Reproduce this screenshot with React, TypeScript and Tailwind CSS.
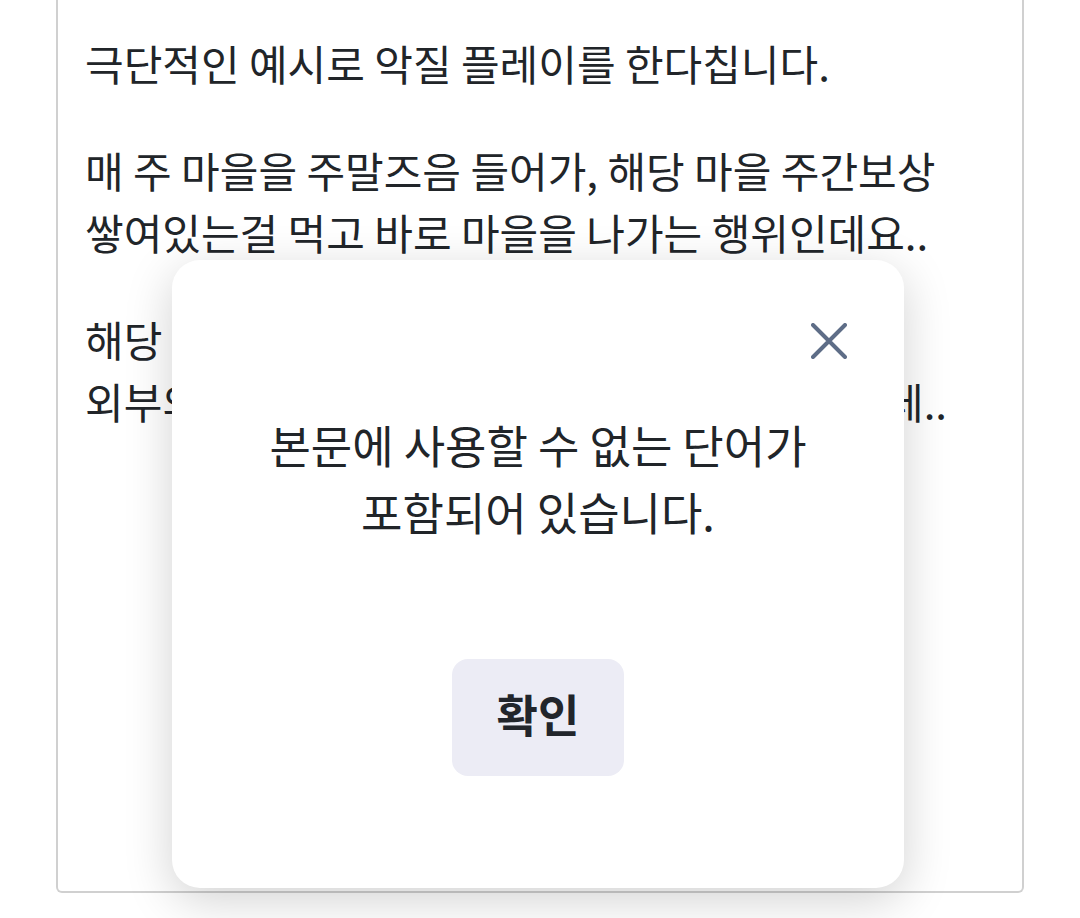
import { useState } from 'react';

export default function App() {
  const [open, setOpen] = useState(true);

  return (
    <div
      className="relative h-[918px] w-[1080px] overflow-hidden bg-white text-[#212529]"
      style={{ fontFamily: '"Noto Sans CJK KR", "Noto Sans", sans-serif' }}
    >
      <div className="px-[56px]">
        <div className="h-[893px] rounded-b-[6px] border-x-2 border-b-2 border-[#d0d0d0] px-[27px] pt-[32px] text-[42px] leading-[62px]">
          <p className="mb-[45px] whitespace-nowrap">극단적인 예시로 악질 플레이를 한다칩니다.</p>
          <p className="mb-[45px] whitespace-nowrap">
            매 주 마을을 주말즈음 들어가, 해당 마을 주간보상
            <br />
            쌓여있는걸 먹고 바로 마을을 나가는 행위인데요..
          </p>
          <p className="whitespace-nowrap">
            해당 마을 사람들은 보상을 받을 수 없고
            <br />
            외부의 사람만 이득을 보는 거라 좀 그런것 같은데..
          </p>
        </div>
      </div>

      {open && (
        <div className="absolute left-[172px] top-[260px] flex h-[628px] w-[732px] flex-col items-center rounded-[28px] bg-white pt-[63px] shadow-[0_12px_48px_rgba(0,0,0,0.18)]">
          <div className="flex w-full justify-end pr-[57px]">
            <button onClick={() => setOpen(false)} className="h-[36px] w-[36px]">
              <svg viewBox="0 0 36 36" width="36" height="36" fill="none">
                <path d="M2 2L34 34M34 2L2 34" stroke="#5e6d87" strokeWidth="4" strokeLinecap="round" />
              </svg>
            </button>
          </div>
          <p className="mt-[52px] whitespace-nowrap text-center text-[45px] leading-[67px]">
            본문에 사용할 수 없는 단어가
            <br />
            포함되어 있습니다.
          </p>
          <button
            onClick={() => setOpen(false)}
            className="mt-[114px] h-[117px] w-[172px] rounded-[16px] bg-[#ececf5] pb-[8px] text-[45px] font-bold text-[#22252b]"
          >
            확인
          </button>
        </div>
      )}
    </div>
  );
}
